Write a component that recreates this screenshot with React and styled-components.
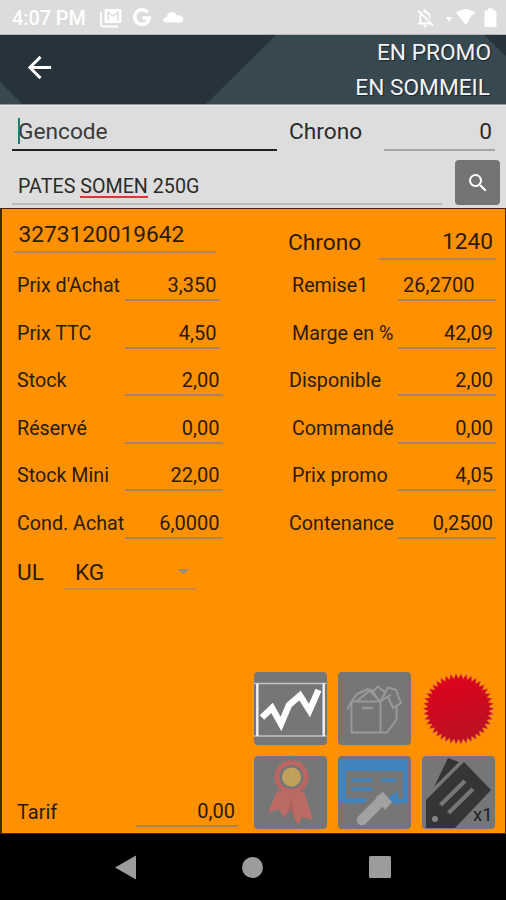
import React from 'react';
import styled, { createGlobalStyle } from 'styled-components';
import { MdArrowBack, MdSearch, MdOutlineNotificationsOff } from 'react-icons/md';

const GlobalStyle = createGlobalStyle`
  body {
    margin: 0;
    background: #000000;
  }

  * {
    box-sizing: border-box;
  }

  svg {
    display: block;
  }
`;

const Screen = styled.div`
  width: 506px;
  height: 900px;
  display: flex;
  flex-direction: column;
  overflow: hidden;
  font-family: Roboto, "Liberation Sans", sans-serif;
  color: #2b2b2b;
`;

const StatusBar = styled.div`
  height: 35px;
  padding: 0 9px 0 12px;
  display: flex;
  justify-content: space-between;
  background: #dcdcdc;
  color: #ffffff;
  border-bottom: 1px solid #b4b8ba;
`;

const StatusGroup = styled.div`
  display: flex;
  align-items: center;
  height: 36px;
`;

const Clock = styled.div`
  width: 88px;
  padding-top: 1px;
  font-size: 19.8px;
  font-weight: 500;
  line-height: 24px;
  white-space: nowrap;
`;

const Header = styled.header`
  position: relative;
  height: 70px;
  padding: 0 15px 0 22px;
  display: flex;
  justify-content: space-between;
  background: #384850;
  border-bottom: 1px solid #8d989d;

  &::before {
    content: '';
    position: absolute;
    inset: 0;
    background: #27333b;
    clip-path: polygon(0 0, 276px 0, 206px 100%, 22px 100%, 0 47px);
  }

  &::after {
    content: '';
    position: absolute;
    top: 0;
    right: 0;
    width: 22px;
    height: 21px;
    background: #27333b;
    clip-path: polygon(0 0, 100% 0, 100% 100%);
  }
`;

const BackButton = styled.button`
  position: relative;
  z-index: 1;
  width: 35px;
  height: 35px;
  margin-top: 15px;
  padding: 0;
  border: 0;
  background: none;
  color: #ffffff;
`;

const Flags = styled.div`
  position: relative;
  z-index: 1;
  text-align: right;
  font-size: 22.7px;
  line-height: 35.4px;
  color: #f2f5f8;
  text-shadow: 1px 1px 1px #17222c;
`;

const Flag = styled.div`
  padding-right: ${(props) => props.$shift || 0}px;
`;

const SearchForm = styled.div`
  height: 103px;
  padding: 0 6px 0 12px;
  background: #dddddd;
  border-top: 1px solid #e9e9e9;
`;

const FormLine = styled.div`
  display: flex;
  height: ${(props) => props.$height}px;
`;

const FormInput = styled.div`
  width: ${(props) => props.$width}px;
  height: ${(props) => props.$height}px;
  padding: ${(props) => props.$top}px ${(props) => props.$right || 0}px 0 6px;
  border-bottom: 2px solid ${(props) => props.$line};
  font-size: ${(props) => props.$size}px;
  line-height: 28px;
  text-align: ${(props) => props.$align || 'left'};
  white-space: nowrap;
`;

const Placeholder = styled.span`
  position: relative;
  color: #3a3a3a;
`;

const Caret = styled.span`
  position: absolute;
  left: 0;
  top: 0;
  width: 2px;
  height: 26px;
  background: #1f7f72;
`;

const FormLabel = styled.div`
  width: 95px;
  margin-left: 12px;
  padding-top: 12px;
  font-size: 22.7px;
  line-height: 28px;
`;

const Misspelled = styled.span`
  display: inline-block;
  height: 25px;
  border-bottom: 2px solid #ee2c35;
`;

const SearchButton = styled.button`
  width: 45px;
  height: 45px;
  margin: 4px 0 0 13px;
  padding: 0;
  display: flex;
  align-items: center;
  justify-content: center;
  border: 0;
  border-radius: 4px;
  background: #747474;
  color: #ffffff;
`;

const Panel = styled.main`
  height: 626px;
  display: flex;
  flex-direction: column;
  justify-content: space-between;
  background: #ff9000;
  border-style: solid;
  border-color: #4a2600;
  border-width: 1px 1px 1px 2px;
  color: #2c1b04;
`;

const Columns = styled.div`
  display: flex;
`;

const Column = styled.div`
  width: ${(props) => props.$width}px;
`;

const CodeField = styled.div`
  height: 64px;
  padding-top: ${(props) => props.$top}px;
  display: flex;
  font-size: 22.7px;
  line-height: 28px;
`;

const CodeValue = styled.div`
  width: ${(props) => props.$width}px;
  height: ${(props) => props.$height}px;
  margin-left: ${(props) => props.$left}px;
  padding: 0 ${(props) => props.$pad || 0}px;
  border-bottom: 2px solid #b5835a;
  text-align: ${(props) => props.$align || 'left'};
`;

const CodeLabel = styled.div`
  width: 93px;
  padding-top: 1px;
`;

const Row = styled.div`
  height: 47.6px;
  display: flex;
  font-size: 19.7px;
  line-height: 24px;
`;

const RowLabel = styled.div`
  width: ${(props) => props.$width}px;
  padding: 1px 0 0 ${(props) => props.$indent || 0}px;
  white-space: nowrap;
`;

const RowValue = styled.div`
  width: ${(props) => props.$width}px;
  height: 28px;
  padding: 0 3px 0 5px;
  border-bottom: 2px solid #aa805f;
  font-size: 20px;
  text-align: ${(props) => props.$align || 'right'};
`;

const UnitRow = styled.div`
  display: flex;
  padding-left: 15px;
  font-size: 22.7px;
  line-height: 28px;
`;

const UnitSelect = styled.div`
  width: 133px;
  height: 31px;
  margin-left: 20px;
  padding: 0 7px 0 11px;
  display: flex;
  justify-content: space-between;
  border-bottom: 2px solid #cf8b3e;
`;

const SelectArrow = styled.span`
  margin-top: 10px;
  width: 13px;
  height: 6px;
  background: #a08d76;
  clip-path: polygon(0 0, 100% 0, 50% 100%);
`;

const Footer = styled.div`
  display: flex;
  align-items: flex-end;
  justify-content: space-between;
  padding: 0 10.5px 4px 14px;
`;

const PriceList = styled.div`
  display: flex;
  padding-bottom: 2px;
  font-size: 20px;
  line-height: 24px;
`;

const Actions = styled.div`
  display: grid;
  grid-template-columns: repeat(3, 72.5px);
  grid-auto-rows: 73px;
  gap: 11.5px;
`;

const Action = styled.button`
  padding: 0;
  border: 0;
  border-radius: 4px;
  overflow: hidden;
  background: ${(props) => (props.$plain ? 'none' : '#767676')};
`;

const NavBar = styled.nav`
  flex: 1;
  display: flex;
  align-items: center;
  justify-content: space-between;
  padding: 0 115px;
  background: #000000;
`;

const leftRows = [
  { label: "Prix d'Achat", value: '3,350', width: 95 },
  { label: 'Prix TTC', value: '4,50', width: 95 },
  { label: 'Stock', value: '2,00', width: 98 },
  { label: 'Réservé', value: '0,00', width: 98 },
  { label: 'Stock Mini', value: '22,00', width: 98 },
  { label: 'Cond. Achat', value: '6,0000', width: 98 }
];

const rightRows = [
  { label: 'Remise1', value: '26,2700', indent: 4, align: 'left' },
  { label: 'Marge en %', value: '42,09', indent: 4 },
  { label: 'Disponible', value: '2,00', indent: 1 },
  { label: 'Commandé', value: '0,00', indent: 4 },
  { label: 'Prix promo', value: '4,05', indent: 4 },
  { label: 'Contenance', value: '0,2500', indent: 1 }
];

// alternating outer / inner points of a serrated disc
const serrated = (cx, cy, outer, inner, teeth) =>
  Array.from({ length: teeth * 2 }, (_, i) => {
    const r = i % 2 ? inner : outer;
    const a = (Math.PI * i) / teeth;
    return `${(cx + r * Math.cos(a)).toFixed(2)},${(cy + r * Math.sin(a)).toFixed(2)}`;
  }).join(' ');

const LeftStatusIcons = () => (
  <svg width="84" height="20" viewBox="0 0 84 20" fill="none">
    <path d="M1 4v12.5q0 2 2 2h15" stroke="#fff" strokeWidth="1.8" />
    <rect x="4.5" y="1" width="17" height="14" rx="1.5" fill="#fff" />
    <path d="M8.2 12.5V4.2l4.8 4 4.8-4v8.3" stroke="#dcdcdc" strokeWidth="1.4" />
    <path d="M47.7 4.4A7.3 7.3 0 1 0 49.3 10H42.5" stroke="#fff" strokeWidth="3.6" />
    <path d="M66 14.5c-4 0-3.8-5 .4-5.2C68 3.5 74 1.5 76.5 7.2c3.5-.2 6.800 1.3 6.800 4.3 0 2-1.5 3-3.3 3z" fill="#fff" />
  </svg>
);

const RightStatusIcons = () => (
  <svg width="52" height="20" viewBox="0 0 52 20">
    <path d="M1 9h6l-3 5z" fill="#fff" />
    <path d="M11 4.5q9.5-7 19.5 0L20.800 17z" fill="#fff" />
    <path d="M28 6l-3.5 5.5h5M28.3 8v6" stroke="#dcdcdc" strokeWidth="1.2" fill="none" />
    <path d="M40.5 2.500h2.500V0.500h5v2h2.500q1 0 1 1v14.500q0 1-1 1h-10q-1 0-1-1V3.500q0-1 1-1z" fill="#fff" />
  </svg>
);

const ChartIcon = () => (
  <svg width="72.5" height="73" viewBox="0 0 72.5 73" fill="none">
    <path d="M0 11.5h72.5M0 64h72.5" stroke="#c4c4c4" strokeWidth="1.6" />
    <path d="M3.3 11.5V64M69.7 11.5V64" stroke="#f4f4f4" strokeWidth="2.4" />
    <path d="M8 45.5L18 36L27 52L35 33L46 23.5L55.5 38.500L64.500 18" stroke="#fff" strokeWidth="6.4" />
  </svg>
);

const BoxIcon = () => (
  <svg width="72.5" height="73" viewBox="0 0 72.5 73" fill="none" stroke="#999" strokeWidth="2" strokeLinejoin="round">
    <path d="M13.5 29.5H42.5V60.5H13.5zM42.5 29.5L53 22.5M58.500 35V47.500L49 60.500H42.500" />
    <path d="M13.5 29.5L9.5 37M13.5 29.5L19 22L30 17L42.5 29.5" />
    <path d="M19 29L33 17.5L39 26M34.5 20L40 14.5L48 21" />
    <path d="M42.5 29.5L50 15.5L58 18L63 31L55 36L50 25" />
    <path d="M24 36H35" strokeWidth="2.4" />
  </svg>
);

const SealIcon = () => (
  <svg width="72.5" height="73" viewBox="0 0 72.5 73">
    <defs>
      <linearGradient id="seal" x1="0" y1="0" x2="0.3" y2="1">
        <stop offset="0" stopColor="#e4001c" />
        <stop offset="1" stopColor="#bb1122" />
      </linearGradient>
    </defs>
    <polygon points={serrated(36.5, 36.8, 35.5, 30.5, 42)} fill="url(#seal)" stroke="#e9694f" strokeWidth="0.5" />
  </svg>
);

const AwardIcon = () => (
  <svg width="72.5" height="73" viewBox="0 0 72.5 73">
    <path d="M23 35L14 57L24.5 53L30.5 62L36 52L44.5 70L47.5 61L59 64L50 36z" fill="#bb6a64" />
    <path d="M34 62L37 41L40 60L36 52z" fill="#a9605b" />
    <polygon points={serrated(37.5, 21, 18, 16, 18)} fill="#bb6660" />
    <circle cx="37.5" cy="21" r="12" fill="#767676" />
    <circle cx="37.5" cy="21" r="9.5" fill="#c1a05c" />
  </svg>
);

const CardIcon = () => (
  <svg width="72.5" height="73" viewBox="0 0 72.5 73">
    <path d="M2 3H70V47H59V43H65V15H8V42H30L26 47H2z" fill="#4284be" />
    <path d="M13.5 24H34M13.5 33H34M43 24H58" stroke="#4284be" strokeWidth="3.6" />
    <path d="M49 43L60 35V49z" fill="#4284be" />
    <path d="M44 44L24 64" stroke="#a2a2a2" strokeWidth="10.5" strokeLinecap="round" />
    <path d="M38 41L45 36L54 46L47 54z" fill="#a2a2a2" />
  </svg>
);

const TagsIcon = () => (
  <svg width="72.5" height="73" viewBox="0 0 72.5 73">
    <path d="M26 2L37 6L12 31z" fill="#353535" />
    <path d="M4 44L42 6L69 34L33 72H4z" fill="#353535" />
    <path d="M18.5 49L43 25M26.5 57L51 33" stroke="#767676" strokeWidth="4.2" />
    <circle cx="13" cy="63" r="3" fill="#858585" />
    <text x="51" y="64.5" fontFamily="Roboto, sans-serif" fontSize="18.5" fill="#202020">x1</text>
  </svg>
);

const Gencode = () => (
  <FormLine $height={50}>
    <FormInput $width={265} $height={45} $top={12} $line="#222222" $size={22.7}>
      <Placeholder>
        <Caret />
        Gencode
      </Placeholder>
    </FormInput>
    <FormLabel>Chrono</FormLabel>
    <FormInput $width={111} $height={45} $top={12} $right={3} $line="#a6a6a6" $size={22.7} $align="right">
      0
    </FormInput>
  </FormLine>
);

const Designation = () => (
  <FormLine $height={51}>
    <FormInput $width={430} $height={49} $top={17} $line="#bcbcbc" $size={19.7}>
      PATES <Misspelled>SOMEN</Misspelled> 250G
    </FormInput>
    <SearchButton>
      <MdSearch size={24} />
    </SearchButton>
  </FormLine>
);

const App = () => (
  <Screen>
    <GlobalStyle />
    <StatusBar>
      <StatusGroup>
        <Clock>4:07 PM</Clock>
        <LeftStatusIcons />
      </StatusGroup>
      <StatusGroup>
        <MdOutlineNotificationsOff size={22} style={{ marginRight: 9 }} />
        <RightStatusIcons />
      </StatusGroup>
    </StatusBar>
    <Header>
      <BackButton>
        <MdArrowBack size={35} />
      </BackButton>
      <Flags>
        <Flag>EN PROMO</Flag>
        <Flag $shift={1}>EN SOMMEIL</Flag>
      </Flags>
    </Header>
    <SearchForm>
      <Gencode />
      <Designation />
    </SearchForm>
    <Panel>
      <div>
        <Columns>
          <Column $width={286}>
            <CodeField $top={12}>
              <CodeValue $width={202} $height={32} $left={11.5} $pad={5}>3273120019642</CodeValue>
            </CodeField>
            {leftRows.map((row) => (
              <Row key={row.label}>
                <RowLabel $width={122.5} $indent={15}>{row.label}</RowLabel>
                <RowValue $width={row.width}>{row.value}</RowValue>
              </Row>
            ))}
          </Column>
          <Column $width={208}>
            <CodeField $top={19}>
              <CodeLabel>Chrono</CodeLabel>
              <CodeValue $width={117} $height={32} $left={-2} $pad={3} $align="right">1240</CodeValue>
            </CodeField>
            {rightRows.map((row) => (
              <Row key={row.label}>
                <RowLabel $width={110} $indent={row.indent}>{row.label}</RowLabel>
                <RowValue $width={98} $align={row.align}>{row.value}</RowValue>
              </Row>
            ))}
          </Column>
        </Columns>
        <UnitRow>
          UL
          <UnitSelect>
            KG
            <SelectArrow />
          </UnitSelect>
        </UnitRow>
      </div>
      <Footer>
        <PriceList>
          <RowLabel $width={120} $indent={1}>Tarif</RowLabel>
          <RowValue $width={102}>0,00</RowValue>
        </PriceList>
        <Actions>
          <Action><ChartIcon /></Action>
          <Action><BoxIcon /></Action>
          <Action $plain><SealIcon /></Action>
          <Action><AwardIcon /></Action>
          <Action><CardIcon /></Action>
          <Action><TagsIcon /></Action>
        </Actions>
      </Footer>
    </Panel>
    <NavBar>
      <svg width="21" height="25" viewBox="0 0 21 25"><path d="M21 0.5V24.5L0 12.5z" fill="#9c9c9c" /></svg>
      <svg width="21" height="21" viewBox="0 0 21 21"><circle cx="10.5" cy="10.5" r="10.5" fill="#9c9c9c" /></svg>
      <svg width="22" height="22" viewBox="0 0 22 22"><rect width="22" height="22" rx="1.5" fill="#9c9c9c" /></svg>
    </NavBar>
  </Screen>
);

export default App;
